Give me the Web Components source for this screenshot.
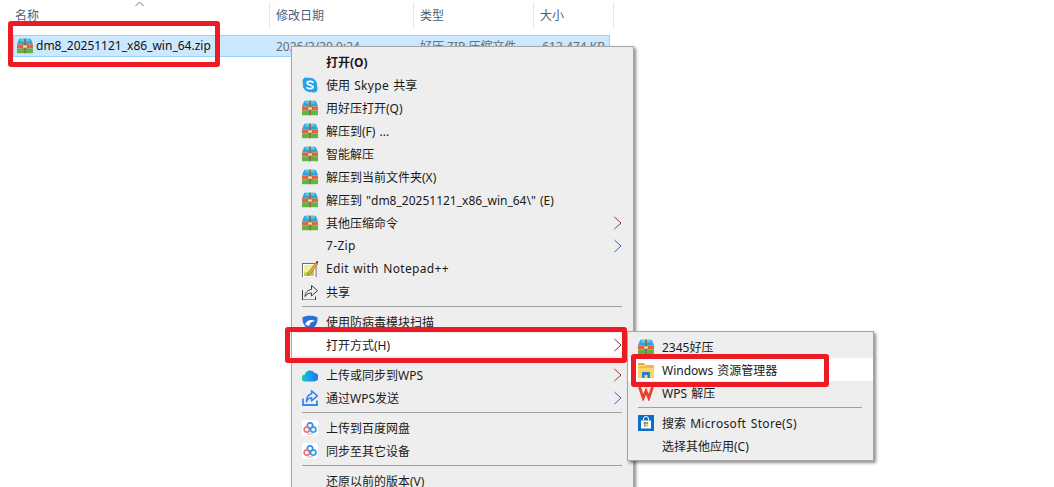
<!DOCTYPE html>
<html>
<head>
<meta charset="utf-8">
<style>
    html, body {
        margin: 0;
        height: 100%;
        overflow: hidden;
        background: #fff;
    }
    body {
        position: relative;
        width: 1054px;
        height: 487px;
        font: 12px "Noto Sans", "Noto Sans CJK SC", sans-serif;
        color: #1a1a1a;
    }
    .ctx { left: 291px; top: 46px; width: 343px; }
    .sub { left: 627px; top: 331px; width: 247px; }
    .l { letter-spacing: .33px; }
</style>
</head>
<body>
<file-header></file-header>
<file-row name="dm8_20251121_x86_win_64.zip" date="2026/3/30 9:24" type="好压 ZIP 压缩文件" size="613,474 KB"></file-row>

<ctx-menu class="ctx">
    <ctx-item bold>打开(O)</ctx-item>
    <ctx-item icon="skype">使用 <span class="l">Skype</span> 共享</ctx-item>
    <ctx-item icon="zip">用好压打开(Q)</ctx-item>
    <ctx-item icon="zip">解压到(F) ...</ctx-item>
    <ctx-item icon="zip">智能解压</ctx-item>
    <ctx-item icon="zip">解压到当前文件夹(X)</ctx-item>
    <ctx-item icon="zip">解压到 "dm8_20251121_x86_win_64\" (E)</ctx-item>
    <ctx-item icon="zip" arrow="#9c3330">其他压缩命令</ctx-item>
    <ctx-item arrow="#2f66ac"><span class="l">7-Zip</span></ctx-item>
    <ctx-item icon="notepad"><span class="l">Edit with Notepad++</span></ctx-item>
    <ctx-item icon="share">共享</ctx-item>
    <ctx-sep></ctx-sep>
    <ctx-item icon="shield">使用防病毒模块扫描</ctx-item>
    <ctx-item active arrow="#6a3c3c">打开方式(H)</ctx-item>
    <ctx-sep></ctx-sep>
    <ctx-item icon="cloud" arrow="#9c3330">上传或同步到WPS</ctx-item>
    <ctx-item icon="send" arrow="#2f66ac">通过WPS发送</ctx-item>
    <ctx-sep></ctx-sep>
    <ctx-item icon="baidu">上传到百度网盘</ctx-item>
    <ctx-item icon="baidu">同步至其它设备</ctx-item>
    <ctx-sep></ctx-sep>
    <ctx-item>还原以前的版本(V)</ctx-item>
</ctx-menu>

<ctx-menu class="sub">
    <ctx-item icon="zip">2345好压</ctx-item>
    <ctx-item icon="folder" active>Windows 资源管理器</ctx-item>
    <ctx-item icon="wps">WPS 解压</ctx-item>
    <ctx-sep></ctx-sep>
    <ctx-item icon="store">搜索 <span class="l">Microsoft Store(S)</span></ctx-item>
    <ctx-item>选择其他应用(C)</ctx-item>
</ctx-menu>

<red-box x="8" y="21" w="212" h="46"></red-box>
<red-box x="285" y="327" w="342" h="36"></red-box>
<red-box x="631" y="354" w="198" h="33"></red-box>

<script>
const ICONS = {
    zip: `<path d="M3.500.8h9c1 0 1.500.6 2 1.700L16 6.500H0l1.500-4C2 1.400 2.500.8 3.500.8z" fill="#2fa2e6"/><path d="M4 .8h8l1 2.700H3z" fill="#55d2dc"/><rect x="0" y="6.500" width="16" height="4" fill="#ea6238"/><rect x="0" y="10.500" width="16" height="4.700" fill="#5cb544"/><rect x="7" y=".8" width="2" height="14.400" fill="#a0703c"/><rect x="5.800" y="7" width="4.400" height="3" fill="#f3e2b4" stroke="#8a5a2c" stroke-width=".6"/>`,
    skype: `<circle cx="4.500" cy="4.500" r="4" fill="#25a3e8"/><circle cx="11.500" cy="11.500" r="4" fill="#25a3e8"/><circle cx="8" cy="8" r="7.200" fill="#25a3e8"/><path d="M11 5.400C10 4 5.200 3.800 5.100 6.100c0 2.400 5.900 1.300 5.900 4 0 2.200-5.200 1.900-6.100.5" fill="none" stroke="#fff" stroke-width="1.700" stroke-linecap="round"/>`,
    notepad: `<rect x=".5" y="2.500" width="13.500" height="14" fill="#fff" stroke="#6e6e6e"/><path d="M2 4.500h10V15H2z" fill="#b0d255"/><path d="M2 4.500h10v4L2 12z" fill="#ecefa4"/><path d="M6 12L13.500 1.800l2 1.400-7.500 10.200-2.500 1z" fill="#f0a830" stroke="#8a5a1c" stroke-width=".5"/><circle cx="15.200" cy="1.200" r="1.200" fill="#a81c1c"/>`,
    share: `<path d="M.5 6v10h13v-3.500" fill="none" stroke="#3c3c3c"/><path d="M9.500 1.500l6 5.200-6 5.300V9c-2.800 0-4.800 1-6.500 3.500.2-4 2.800-6.700 6.500-7z" fill="none" stroke="#3c3c3c" stroke-linejoin="round"/>`,
    shield: `<path d="M.5 3.500C3 1 13 1 15.500 3.500c.5 5.500-2.500 10.500-7.500 12.500C3 14 0 9 .5 3.500z" fill="#2d6ed6"/><path d="M3 10.500C4.500 6.300 9 4.500 13.500 7.200 10.500 7 8.200 8.200 7 12z" fill="#fff"/>`,
    cloud: `<defs><linearGradient id="c" x1="0" x2="1"><stop offset="0" stop-color="#12d2ae"/><stop offset=".5" stop-color="#189cf0"/><stop offset="1" stop-color="#2a6ff0"/></linearGradient></defs><path d="M3.500 14.500a3.500 3.500 0 0 1-.6-7A5.300 5.300 0 0 1 12.400 5.700 4.400 4.400 0 0 1 12 14.500z" fill="url(#c)"/>`,
    send: `<path d="M1 8.500v6.500h14v-4.500" fill="none" stroke="#3a86f0" stroke-width="1.800"/><path d="M9.500.8l6 5L9.500 10.800V7.800C7 7.800 5.500 9 4.500 11.800c0-4.500 1.500-7.300 5-7.800z" fill="none" stroke="#3a86f0" stroke-width="1.600" stroke-linejoin="round"/>`,
    baidu: `<rect x="0" y="0" width="16" height="16" rx="3" fill="#fff"/><circle cx="8" cy="5.500" r="2.700" fill="none" stroke="#3a8ee8" stroke-width="1.700"/><circle cx="4.800" cy="9.500" r="2.700" fill="none" stroke="#e8707e" stroke-width="1.700"/><circle cx="11.200" cy="9.500" r="2.700" fill="none" stroke="#2aa0e8" stroke-width="1.700"/><path d="M5 14h6" stroke="#f0a0a8"/>`,
    folder: `<path d="M0 1h6l1.500 2H0z" fill="#e6ac3c"/><rect x="0" y="3" width="16" height="13" fill="#fbd667"/><path d="M0 6h16V3H8L7 4.500H0z" fill="#eebd48"/><path d="M4 16v-6h8v6H9.500v-3h-3v3z" fill="#2a7fd0"/>`,
    wps: `<path d="M1.500 2l3.700 11L8 6l2.800 7L14.500 2" fill="none" stroke="#e8402c" stroke-width="2.800" stroke-linejoin="miter"/>`,
    store: `<rect x="0" y="0" width="16" height="16" fill="#0a6fc4"/><path d="M3 5.500h10v8H3z" fill="#fff"/><path d="M5.500 5.500V4a2.500 2.500 0 0 1 5 0v1.500" fill="none" stroke="#fff"/><rect x="5.800" y="7" width="2" height="2" fill="#e8502c"/><rect x="8.200" y="7" width="2" height="2" fill="#6cb830"/><rect x="5.800" y="9.400" width="2" height="2" fill="#2a9ae8"/><rect x="8.200" y="9.400" width="2" height="2" fill="#f0b820"/>`
};

class FileHeader extends HTMLElement {
    connectedCallback() {
        this.attachShadow({ mode: 'open' }).innerHTML = `
        <style>
            :host { display: flex; height: 26px; padding-top: 2px; color: #4c607a; position: relative; }
            div { box-sizing: border-box; height: 26px; border-right: 1px solid #e5e5e5; line-height: 24px; padding-top: 2px; padding-left: 6px; }
            .up { position: absolute; left: 135px; top: 1px; }
        </style>
        <div style="width:270px;padding-left:15px">名称</div>
        <div style="width:144px">修改日期</div>
        <div style="width:120px">类型</div>
        <div style="width:80px">大小</div>
        <svg class="up" width="9" height="6"><path d="M.5 5L4.500 1l4 4" fill="none" stroke="#777"/></svg>`;
    }
}

class FileRow extends HTMLElement {
    connectedCallback() {
        const a = n => this.getAttribute(n);
        this.attachShadow({ mode: 'open' }).innerHTML = `
        <style>
            :host { display: flex; align-items: center; box-sizing: border-box; height: 22px; width: 597px; margin: 7px 0 0 13px; background: #cce8ff; border: 1px solid #99d1ff; color: #6d6d6d; }
            .name { width: 262px; display: flex; align-items: center; gap: 3px; padding-left: 3px; box-sizing: border-box; color: #111; }
            .name span { padding-bottom: 1px; }
            .d { width: 144px; }
            .t { width: 120px; }
            .s { flex: 1; text-align: right; padding-right: 4px; }
        </style>
        <div class="name"><svg width="16" height="16" viewBox="0 0 16 16">${ICONS.zip}</svg><span>${a('name')}</span></div>
        <div class="d">${a('date')}</div>
        <div class="t">${a('type')}</div>
        <div class="s">${a('size')}</div>`;
    }
}

class CtxMenu extends HTMLElement {
    connectedCallback() {
        this.attachShadow({ mode: 'open' }).innerHTML = `
        <style>
            :host { display: block; position: absolute; box-sizing: border-box; background: #eee; border: 1.5px solid #a6a6a6; padding: 3px 0; box-shadow: 2px 2px 3px rgba(0,0,0,.45); color: #1a1a1a; word-spacing: 1px; }
        </style>
        <slot></slot>`;
    }
}

class CtxItem extends HTMLElement {
    connectedCallback() {
        const icon = this.getAttribute('icon');
        const arrow = this.getAttribute('arrow');
        this.attachShadow({ mode: 'open' }).innerHTML = `
        <style>
            :host { display: flex; align-items: center; height: 23px; white-space: nowrap; }
            :host([active]) { background: #fff; }
            :host([bold]) { font-weight: 700; }
            .ic { width: 16px; height: 16px; margin: 0 8px 0 10px; flex: none; }
            .txt { flex: 1; }
            .ar { margin-right: 11px; }
        </style>
        <svg class="ic" viewBox="0 0 16 16">${icon ? ICONS[icon] : ''}</svg>
        <span class="txt"><slot></slot></span>
        ${arrow ? `<svg class="ar" width="8" height="14"><path d="M.5 1l6.500 6-6.500 6" fill="none" stroke="${arrow}"/></svg>` : ''}`;
    }
}

class CtxSep extends HTMLElement {
    connectedCallback() {
        this.attachShadow({ mode: 'open' }).innerHTML = `
        <style>
            :host { display: block; height: 1px; margin: 3px 11px 3px 10px; background: #a0a0a0; }
        </style>`;
    }
}

class RedBox extends HTMLElement {
    connectedCallback() {
        const a = n => this.getAttribute(n);
        this.attachShadow({ mode: 'open' }).innerHTML = `
        <style>
            :host { display: block; position: absolute; box-sizing: border-box; border: 5px solid #ed1c24; border-radius: 3px; left: ${a('x')}px; top: ${a('y')}px; width: ${a('w')}px; height: ${a('h')}px; }
        </style>`;
    }
}

customElements.define('file-header', FileHeader);
customElements.define('file-row', FileRow);
customElements.define('ctx-menu', CtxMenu);
customElements.define('ctx-item', CtxItem);
customElements.define('ctx-sep', CtxSep);
customElements.define('red-box', RedBox);
</script>
</body>
</html>
